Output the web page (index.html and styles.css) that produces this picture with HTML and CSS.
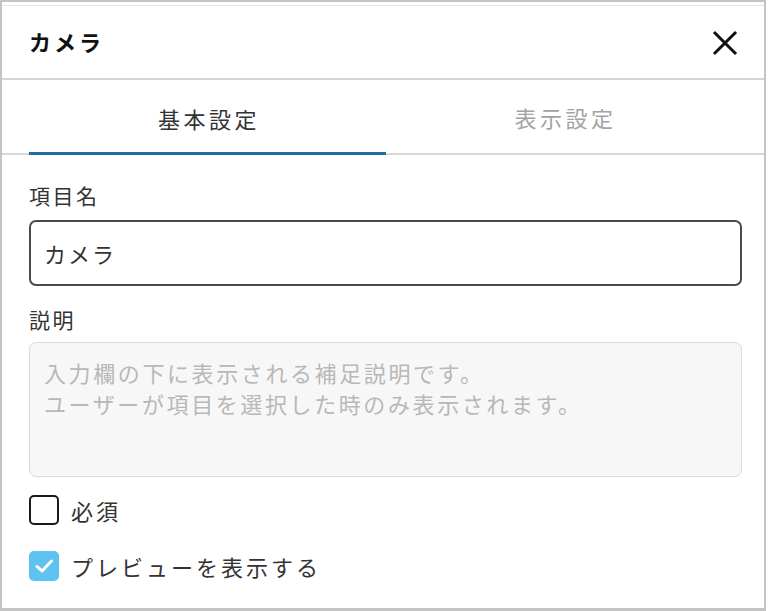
FILE: index.html
```html
<!DOCTYPE html>
<html lang="ja">
<head>
<meta charset="utf-8">
<link rel="stylesheet" href="styles.css">
</head>
<body>
<div class="panel">
  <header class="head">
    <h1 class="title">カメラ</h1>
    <button class="close" aria-label="閉じる">
      <svg width="26" height="26" viewBox="0 0 26 26"><path d="M3 3 L23 23 M23 3 L3 23" stroke="#111" stroke-width="3" stroke-linecap="square" fill="none"/></svg>
    </button>
  </header>
  <nav class="tabs">
    <div class="tab active">基本設定</div>
    <div class="tab">表示設定</div>
  </nav>
  <section class="body">
    <label class="label label-name">項目名</label>
    <div class="input">カメラ</div>
    <label class="label label-desc">説明</label>
    <div class="textarea">入力欄の下に表示される補足説明です。<br>ユーザーが項目を選択した時のみ表示されます。</div>
    <div class="check-row first">
      <span class="box"></span>
      <span class="check-text">必須</span>
    </div>
    <div class="check-row second">
      <span class="box checked"><svg width="30" height="30" viewBox="0 0 30 30"><path d="M8 15.5 L13 20 L22.5 10" stroke="#fff" stroke-width="3" fill="none" stroke-linecap="round" stroke-linejoin="round"/></svg></span>
      <span class="check-text">プレビューを表示する</span>
    </div>
  </section>
</div>
</body>
</html>
```
FILE: styles.css
```css
* { box-sizing: border-box; }
html, body { margin: 0; padding: 0; background: #ffffff; }
body {
  font-family: "Noto Sans CJK JP", "Noto Sans", sans-serif;
  color: #333;
  width: 768px;
  height: 611px;
  overflow: hidden;
}
.panel {
  width: 766px;
  height: 611px;
  border-left: 2px solid #c4c4c4;
  border-right: 2px solid #c4c4c4;
  border-top: 2px solid #c4c4c4;
  border-bottom: 3px solid #c4c4c4;
  background: #fff;
  display: flex;
  flex-direction: column;
}
.head {
  height: 75px;
  flex: none;
  margin-top: 3px;
  border-top: 1px solid #e6e6e6;
  border-bottom: 2px solid #d4d4d4;
  display: flex;
  align-items: center;
  justify-content: space-between;
  padding: 0 26px 0 27px;
}
.title {
  margin: 0;
  font-size: 22px;
  font-weight: 700;
  letter-spacing: 3px;
  color: #111;
  line-height: 30px;
  padding-bottom: 2px;
}
.close {
  border: 0;
  background: none;
  padding: 0;
  width: 26px;
  height: 26px;
  display: flex;
  margin-top: 2px;
}
.tabs {
  display: flex;
  flex: none;
  height: 75px;
  border-bottom: 2px solid #d8d8d8;
  padding: 0 22px 0 27px;
}
.tab {
  flex: 1;
  display: flex;
  align-items: center;
  justify-content: center;
  font-size: 22px;
  letter-spacing: 3.5px;
  text-indent: 3.5px;
  color: #a3a3a3;
  padding-top: 1px;
}
.tab.active {
  color: #333;
  border-bottom: 3px solid #1f6e9c;
  margin-bottom: -2px;
  padding-top: 3px;
}
.body {
  display: flex;
  flex-direction: column;
  padding: 25px 22px 0 27px;
}
.label {
  font-size: 21px;
  letter-spacing: 2.5px;
  line-height: 30px;
  color: #333;
}
.input {
  margin-top: 10px;
  height: 66px;
  border: 2px solid #4a4a4a;
  border-radius: 7px;
  display: flex;
  align-items: center;
  padding: 0 0 0 13px;
  font-size: 22px;
  letter-spacing: 2px;
  color: #333;
}
.label-desc { margin-top: 18px; }
.textarea {
  margin-top: 8px;
  height: 135px;
  background: #f7f7f7;
  border: 1px solid #dadada;
  border-radius: 7px;
  padding: 14px 0 0 14px;
  font-size: 22px;
  letter-spacing: 2.6px;
  line-height: 31px;
  color: #b8b8b8;
  white-space: nowrap;
}
.check-row {
  display: flex;
  align-items: center;
  gap: 12px;
  height: 31px;
}
.check-row.first { margin-top: 17px; }
.check-row.second { margin-top: 25px; }
.box {
  width: 30px;
  height: 30px;
  border: 2.5px solid #1a1a1a;
  border-radius: 5px;
  display: flex;
  align-items: center;
  justify-content: center;
}
.box.checked {
  background: #5ec3f0;
  border: 0;
}
.check-text {
  font-size: 22px;
  letter-spacing: 3px;
  color: #333;
}
```
